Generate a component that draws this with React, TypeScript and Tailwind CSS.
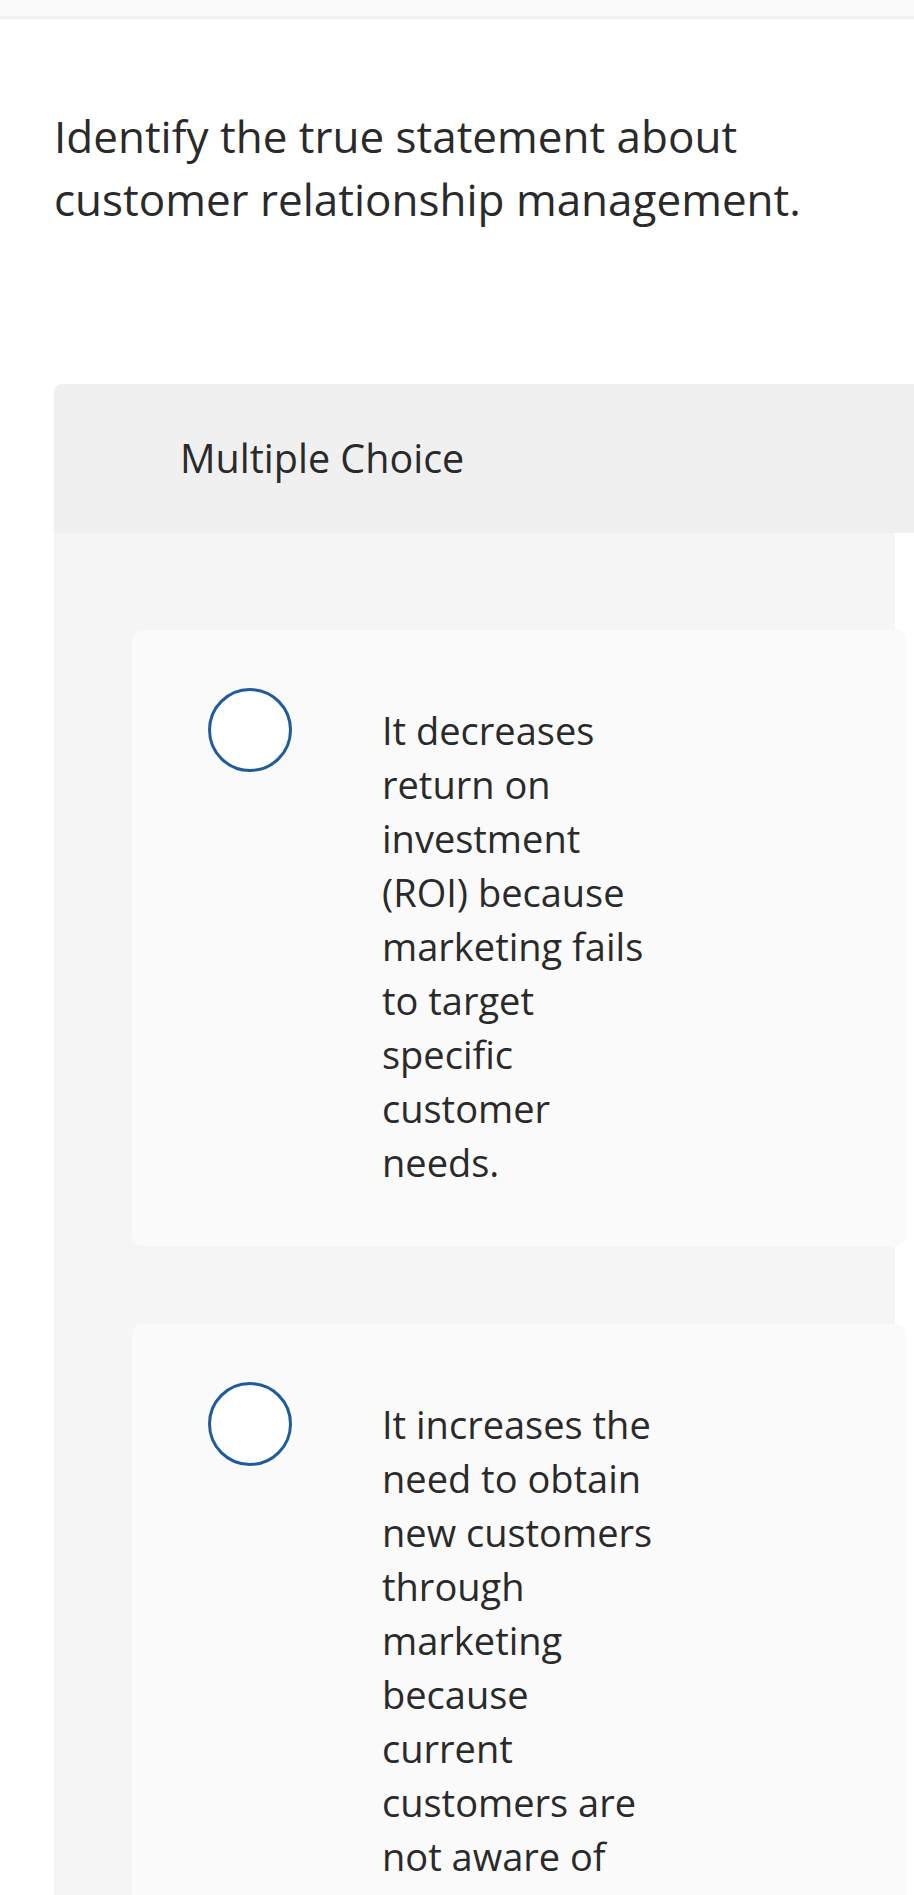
const choices = [
  "It decreases return on investment (ROI) because marketing fails to target specific customer needs.",
  "It increases the need to obtain new customers through marketing because current customers are not aware of the company's offerings.",
];

function Radio() {
  return (
    <span className="block w-[84px] h-[84px] shrink-0 rounded-full border-[3px] border-[#1f5c99] bg-white" />
  );
}

export default function App() {
  return (
    <div
      className="min-h-[1895px] bg-white text-[#2a2a2a] overflow-hidden"
      style={{ fontFamily: "'Open Sans', Lato, sans-serif" }}
    >
      {/* top bar */}
      <div className="h-[19px] bg-[#fafafa] border-b-[3px] border-[#f0f0f0]" />

      <h1 className="mt-[86px] ml-[54px] text-[44px] leading-[63px] font-normal">
        Identify the true statement about
        <br />
        customer relationship management.
      </h1>

      {/* question panel */}
      <div className="mt-[153px] ml-[54px] w-[900px]">
        <div className="h-[149px] flex items-center pl-[126px] bg-[#f0f0f0] rounded-t-lg text-[39.5px]">
          Multiple Choice
        </div>
        <div className="w-[841px] bg-[#f5f5f5] pt-[97px] pl-[78px] flex flex-col gap-[78px]">
          {choices.map((c) => (
            <div
              key={c}
              className="w-[774px] bg-[#fafafa] rounded-[10px] pt-[58px] pb-[57px] pl-[76px] flex items-start gap-[90px]"
            >
              <Radio />
              <p className="mt-[15px] w-[280px] text-[38px] leading-[54px]">{c}</p>
            </div>
          ))}
        </div>
      </div>
    </div>
  );
}
